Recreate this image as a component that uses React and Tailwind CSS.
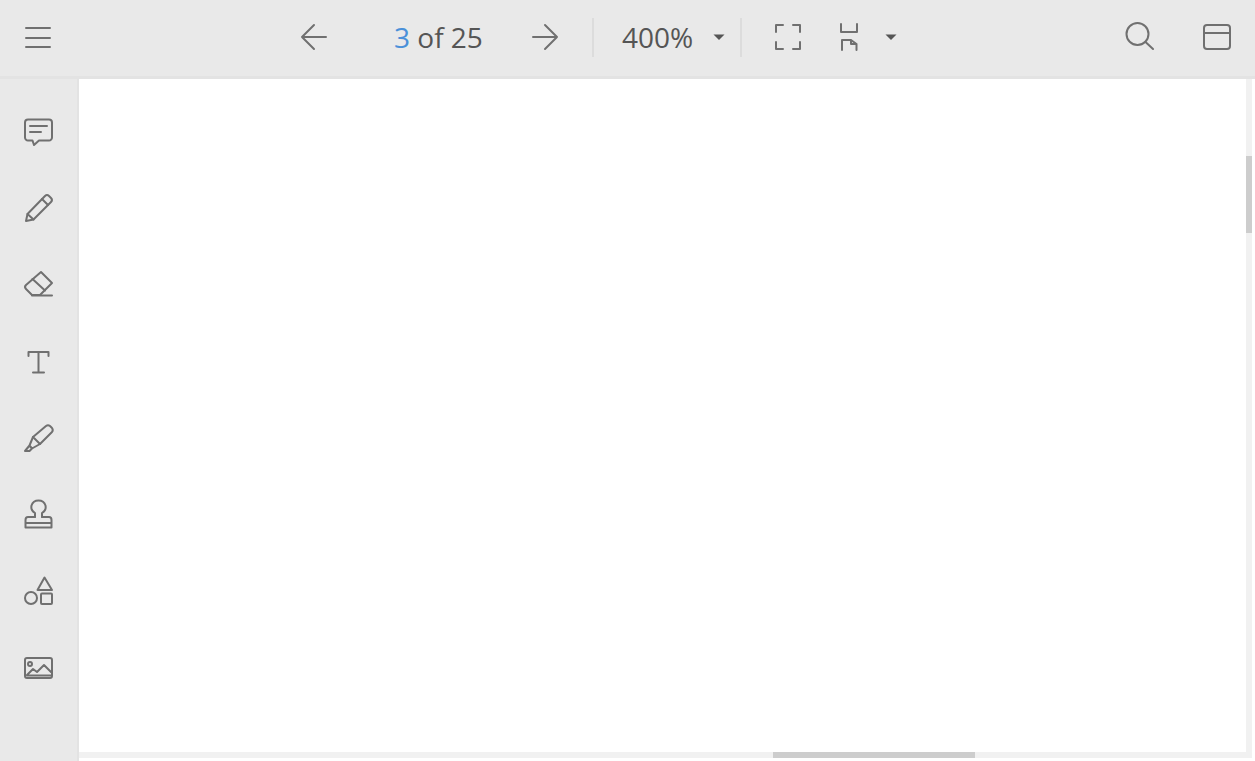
const Ico = ({ w, h, children, className = '' }) => (
  <svg
    width={w}
    height={h}
    viewBox={`0 0 ${w} ${h}`}
    fill="none"
    stroke="#707070"
    strokeWidth="2"
    strokeLinecap="round"
    strokeLinejoin="round"
    className={`shrink-0 ${className}`}
  >
    {children}
  </svg>
)

const Caret = ({ className = '' }) => (
  <svg width="12" height="8" viewBox="0 0 12 8" className={`shrink-0 ${className}`}>
    <path d="M0.5 1.5 H11.5 L6 7 Z" fill="#555" />
  </svg>
)

const Divider = ({ className = '' }) => (
  <div className={`w-0.5 h-[39px] bg-[#dcdcdc] shrink-0 ${className}`} />
)

const sideIcons = [
  // comment
  <>
    <path d="M10 8.500 H31 a3 3 0 0 1 3 3 V26.500 a3 3 0 0 1 -3 3 H21 L16 34 L14.500 29.500 H10 a3 3 0 0 1 -3 -3 V11.500 a3 3 0 0 1 3 -3 Z" />
    <path d="M12 15 H29 M12 21 H23" />
  </>,
  // pencil
  <>
    <path d="M8 33 L9.500 26 L27 8 Q29 6 31 8 L33 10 Q35 12 33 14 L15.500 31.500 Z" />
    <path d="M24 11 L30 17 M9.500 26 L15.500 31.500" />
  </>,
  // eraser
  <>
    <path d="M23 7 L34 18 L22 30 H14 L8 24 Q6 22 8 20 Z" />
    <path d="M14.500 14 L27 25.500 M14 30.500 H34" />
  </>,
  // text
  <path d="M10.500 14 V10 H30.500 V14 M20.500 10 V30 M15 30.500 H26" />,
  // highlighter
  <>
    <path d="M28 7 Q30 5.500 32 7 L34 9 Q35.500 11 34 13 L22 25 L15 18 Z" />
    <path d="M15 18 L11.500 26.500 L14 29.500 L22 25 M11.500 26.500 L7 32 H11.500 L14 29.500" />
  </>,
  // stamp
  <>
    <path d="M17 22 V18 Q12.500 15.500 13.500 10.500 Q15 5.500 20.500 5.500 Q26 5.500 27.500 10.500 Q28.500 15.500 24 18 V22" />
    <path d="M17 22 H10 Q7.500 22 7.500 25 V32.500 H33.500 V25 Q33.500 22 31 22 H24 M7.500 28 H33.500" />
  </>,
  // shapes
  <>
    <path d="M26.500 5.500 L19.500 18 H34 Z" />
    <circle cx="13" cy="26" r="6" />
    <rect x="23" y="21.500" width="11" height="10.500" rx="1" />
  </>,
  // image
  <>
    <rect x="7" y="9" width="27" height="20" rx="2" />
    <circle cx="12" cy="15" r="2" />
    <path d="M9 26 L15 20 L19 23 L26 16 L33 23 M9 26.500 H33" />
  </>,
]

export default function App() {
  return (
    <div className="h-[761px] w-full overflow-hidden flex flex-col bg-white font-['Open_Sans','Noto_Sans',sans-serif]">
      {/* Toolbar */}
      <div className="h-[79px] shrink-0 flex items-center pb-[2px] bg-[#e9e9e9] border-b-[3px] border-[#e3e3e3] text-[28px] text-[#555]">
        <Ico w={26} h={24} className="ml-[25px]">
          <path d="M1 3 H25 M1 13 H25 M1 22 H25" />
        </Ico>

        <Ico w={28} h={28} className="ml-[249px]">
          <path d="M26 14 H2 M14 2 L2 14 L14 26" />
        </Ico>
        <span className="ml-[66px] w-[112px] leading-none whitespace-nowrap">
          <span className="text-[#4a90d9]">3</span> of 25
        </span>
        <Ico w={28} h={28} className="ml-[25px]">
          <path d="M2 14 H26 M14 2 L26 14 L14 26" />
        </Ico>
        <Divider className="ml-[33px]" />

        <span className="ml-[28px] w-[72px] leading-none">400%</span>
        <Caret className="ml-[19px]" />
        <Divider className="ml-[15px]" />

        <Ico w={28} h={28} className="ml-[32px]">
          <path d="M2 9 V2 H9 M19 2 H26 V9 M2 19 V26 H9 M19 26 H26 V19" />
        </Ico>
        <Ico w={18} h={30} className="ml-[38px]">
          <path d="M1 2 V10 H17 V2 M2 28 V18 H11 L16.500 22 V28 M11 18 V22 H16.500" />
        </Ico>
        <Caret className="ml-[27px]" />

        <div className="ml-auto flex items-center gap-[49px] pr-[24px]">
          <Ico w={30} h={30}>
            <circle cx="13.500" cy="12" r="11" />
            <path d="M21.500 20 L29 27" />
          </Ico>
          <Ico w={28} h={26}>
            <rect x="1" y="1" width="26" height="24" rx="3" />
            <path d="M1 9 H27" />
          </Ico>
        </div>
      </div>

      <div className="flex-1 flex min-h-0">
        {/* Left tool rail */}
        <div className="w-[79px] shrink-0 pt-[14px] pr-[2px] bg-[#e9e9e9] border-r-2 border-[#e3e3e3] flex flex-col">
          {sideIcons.map((icon, i) => (
            <div key={i} className="h-[76.8px] shrink-0 flex items-center justify-center">
              <Ico w={40} h={40}>{icon}</Ico>
            </div>
          ))}
        </div>

        {/* Page viewport */}
        <div className="flex-1 relative bg-white">
          {/* Vertical scrollbar */}
          <div className="absolute top-0 bottom-[3px] right-[3px] w-[6px] bg-[#f1f1f1]">
            <div className="mt-[77px] h-[77px] bg-[#cdcdcd]" />
          </div>
          {/* Horizontal scrollbar */}
          <div className="absolute left-0 right-[3px] bottom-[3px] h-[6px] bg-[#f1f1f1]">
            <div className="ml-[694px] w-[202px] h-full bg-[#cdcdcd]" />
          </div>
        </div>
      </div>
    </div>
  )
}
